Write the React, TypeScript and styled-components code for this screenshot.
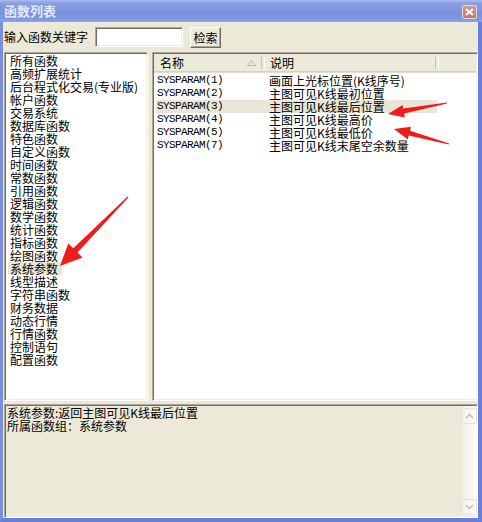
import React from 'react'
import styled, { createGlobalStyle, css } from 'styled-components'

const CJK = `"Noto Sans CJK SC", "Noto Sans", sans-serif`

const GlobalStyle = createGlobalStyle`
  html, body {
    margin: 0;
    padding: 0;
    background: #ffffff;
  }
  * {
    box-sizing: border-box;
  }
`

const sunken = css`
  border: 1px solid;
  border-color: #aca899 #ffffff #ffffff #aca899;
  box-shadow: inset 1px 1px 0 #716f64, inset -1px -1px 0 #f1efe2;
`

const Window = styled.div`
  position: relative;
  width: 482px;
  height: 522px;
  display: flex;
  flex-direction: column;
  font-family: ${CJK};
  font-size: 12px;
  color: #000;
  overflow: hidden;
`

const TitleBar = styled.div`
  height: 22px;
  flex: none;
  display: flex;
  align-items: center;
  justify-content: space-between;
  padding: 0 5px 0 4px;
  background: linear-gradient(to bottom, #a9bbef 0%, #8aa0e4 14%, #7a92dd 55%, #7f97e0 85%, #8ea4e6 100%);
`

const TitleText = styled.span`
  font-size: 13px;
  font-weight: 700;
  color: #e2e9fb;
  letter-spacing: 0;
  line-height: 22px;
`

const CloseButton = styled.div`
  width: 15px;
  height: 14px;
  margin-top: 1px;
  border: 1px solid #e6d6e4;
  border-radius: 2px;
  background: linear-gradient(to bottom, #d69a8e, #c27767);
  display: flex;
  align-items: center;
  justify-content: center;
`

const Frame = styled.div`
  flex: 1;
  display: flex;
  flex-direction: column;
  background: #ece9d8;
  border-left: 3px solid #7b8edf;
  border-right: 4px solid #6a7edb;
  border-bottom: 4px solid #6a7edb;
  padding-left: 1px;
`

const Toolbar = styled.div`
  height: 30px;
  flex: none;
  display: flex;
  align-items: center;
  gap: 7px;
`

const Label = styled.span`
  line-height: 14px;
  white-space: nowrap;
`

const SearchInput = styled.div`
  ${sunken};
  width: 88px;
  height: 20px;
  background: #fff;
`

const SearchButton = styled.div`
  width: 31px;
  height: 21px;
  margin-top: 1px;
  border: 1px solid;
  border-color: #ffffff #716f64 #716f64 #ffffff;
  box-shadow: inset -1px -1px 0 #aca899, inset 1px 1px 0 #f1efe2;
  background: #ece9d8;
  display: flex;
  align-items: center;
  justify-content: center;
  line-height: 14px;
`

const Main = styled.div`
  height: 349px;
  flex: none;
  display: flex;
  gap: 4px;
`

const GroupList = styled.div`
  ${sunken};
  width: 144px;
  flex: none;
  background: #fff;
  padding: 1px;
`

const GroupItem = styled.div<{ $selected?: boolean }>`
  width: fit-content;
  height: 13px;
  line-height: 13px;
  margin-left: 2px;
  padding: 0 4px 0 2px;
  white-space: nowrap;
  background: ${({ $selected }) => ($selected ? '#e9e6d7' : 'transparent')};
`

const FuncList = styled.div`
  ${sunken};
  flex: 1;
  background: #fff;
  padding: 1px;
  display: flex;
  flex-direction: column;
`

const Header = styled.div`
  height: 18px;
  flex: none;
  display: flex;
  background: #ebeadb;
  border-bottom: 1px solid #d6d2c2;
  box-shadow: 0 1px 0 #e2decd;
`

const HeaderCell = styled.div<{ $width?: number }>`
  position: relative;
  width: ${({ $width }) => ($width ? `${$width}px` : 'auto')};
  flex: ${({ $width }) => ($width ? 'none' : '1')};
  display: flex;
  align-items: center;
  padding-left: ${({ $width }) => ($width === 111 ? '6px' : '5px')};
  line-height: 14px;

  &::after {
    content: '';
    display: ${({ $width }) => ($width ? 'block' : 'none')};
    position: absolute;
    right: 0;
    top: 3px;
    bottom: 2px;
    width: 2px;
    border-left: 1px solid #c7c5b2;
    border-right: 1px solid #ffffff;
  }
`

const SortMark = styled.svg`
  margin-left: auto;
  margin-right: 9px;
`

const Rows = styled.div`
  padding-top: 2px;
`

const Row = styled.div<{ $selected?: boolean }>`
  display: flex;
  width: 281px;
  height: 13px;
  margin-left: 2px;
  line-height: 13px;
  background: ${({ $selected }) => ($selected ? '#e9e6d7' : 'transparent')};
`

const NameCell = styled.span`
  width: 109px;
  flex: none;
  padding-left: 1px;
  font-family: "Liberation Mono", "DejaVu Sans Mono", monospace;
  font-size: 11px;
  letter-spacing: -0.6px;
`

const DescCell = styled.span`
  padding-left: 4px;
  white-space: nowrap;
`

const InfoPanel = styled.div`
  ${sunken};
  height: 114px;
  flex: none;
  margin-top: 3px;
  display: flex;
  padding: 1px 0 1px 1px;
`

const InfoText = styled.div`
  flex: 1;
  line-height: 13px;
  padding-left: 1px;
`

const ScrollBar = styled.div`
  width: 16px;
  flex: none;
  display: flex;
  flex-direction: column;
  justify-content: space-between;
  padding: 2px 0 1px;
  background: linear-gradient(to right, #eeede5, #fdfdfa);
`

const ScrollButton = styled.div`
  width: 16px;
  height: 16px;
  border: 1px solid #e3e1d8;
  border-radius: 2px;
  background: linear-gradient(to right, #f1f0eb, #fbfbf9);
  display: flex;
  align-items: center;
  justify-content: center;
`

const Overlay = styled.svg`
  position: absolute;
  left: 0;
  top: 0;
  pointer-events: none;
`

const groups = [
  '所有函数', '高频扩展统计', '后台程式化交易(专业版)', '帐户函数', '交易系统', '数据库函数',
  '特色函数', '自定义函数', '时间函数', '常数函数', '引用函数', '逻辑函数', '数学函数',
  '统计函数', '指标函数', '绘图函数', '系统参数', '线型描述', '字符串函数', '财务数据',
  '动态行情', '行情函数', '控制语句', '配置函数',
]

const funcs = [
  { name: 'SYSPARAM(1)', desc: '画面上光标位置(K线序号)' },
  { name: 'SYSPARAM(2)', desc: '主图可见K线最初位置' },
  { name: 'SYSPARAM(3)', desc: '主图可见K线最后位置' },
  { name: 'SYSPARAM(4)', desc: '主图可见K线最高价' },
  { name: 'SYSPARAM(5)', desc: '主图可见K线最低价' },
  { name: 'SYSPARAM(7)', desc: '主图可见K线末尾空余数量' },
]

const Chevron = ({ up }: { up?: boolean }) => (
  <svg width="9" height="6" viewBox="0 0 9 6">
    <path
      d={up ? 'M1 5 L4.5 1.5 L8 5' : 'M1 1 L4.5 4.5 L8 1'}
      fill="none"
      stroke="#c4c2b8"
      strokeWidth="1.6"
    />
  </svg>
)

const App = () => {
  return (
    <Window>
      <GlobalStyle />
      <TitleBar>
        <TitleText>函数列表</TitleText>
        <CloseButton>
          <svg width="9" height="8" viewBox="0 0 9 8">
            <path d="M1 1 L8 7 M8 1 L1 7" stroke="#fff" strokeWidth="2" />
          </svg>
        </CloseButton>
      </TitleBar>
      <Frame>
        <Toolbar>
          <Label>输入函数关键字</Label>
          <SearchInput />
          <SearchButton>检索</SearchButton>
        </Toolbar>
        <Main>
          <GroupList>
            {groups.map(g => (
              <GroupItem key={g} $selected={g === '系统参数'}>{g}</GroupItem>
            ))}
          </GroupList>
          <FuncList>
            <Header>
              <HeaderCell $width={111}>
                名称
                <SortMark width="9" height="6" viewBox="0 0 9 6">
                  <path d="M0.5 5.5 L4.5 0.5 L8.5 5.5 Z" fill="none" stroke="#b9b7a8" strokeWidth="1" />
                </SortMark>
              </HeaderCell>
              <HeaderCell $width={174}>说明</HeaderCell>
              <HeaderCell />
            </Header>
            <Rows>
              {funcs.map(f => (
                <Row key={f.name} $selected={f.name === 'SYSPARAM(3)'}>
                  <NameCell>{f.name}</NameCell>
                  <DescCell>{f.desc}</DescCell>
                </Row>
              ))}
            </Rows>
          </FuncList>
        </Main>
        <InfoPanel>
          <InfoText>
            <div>系统参数:返回主图可见K线最后位置</div>
            <div>所属函数组：系统参数</div>
          </InfoText>
          <ScrollBar>
            <ScrollButton><Chevron up /></ScrollButton>
            <ScrollButton><Chevron /></ScrollButton>
          </ScrollBar>
        </InfoPanel>
      </Frame>
      <Overlay width="482" height="522" viewBox="0 0 482 522">
        <polygon
          fill="#f01c1c"
          points="128.4,197.4 77.5,252.5 82.5,257.4 60,266 68.3,243.4 73.3,248.3 127.6,196.6"
        />
        <polygon
          fill="#f01c1c"
          points="447.1,103.5 404.2,113.6 404.8,117.5 388,114 402.6,105 403.2,108.6 446.9,102.5"
        />
        <polygon
          fill="#f01c1c"
          points="449.1,143.5 410.1,130.8 411,126.8 394,129 407.8,139.6 408.7,135.6 448.9,144.5"
        />
      </Overlay>
    </Window>
  )
}

export default App
